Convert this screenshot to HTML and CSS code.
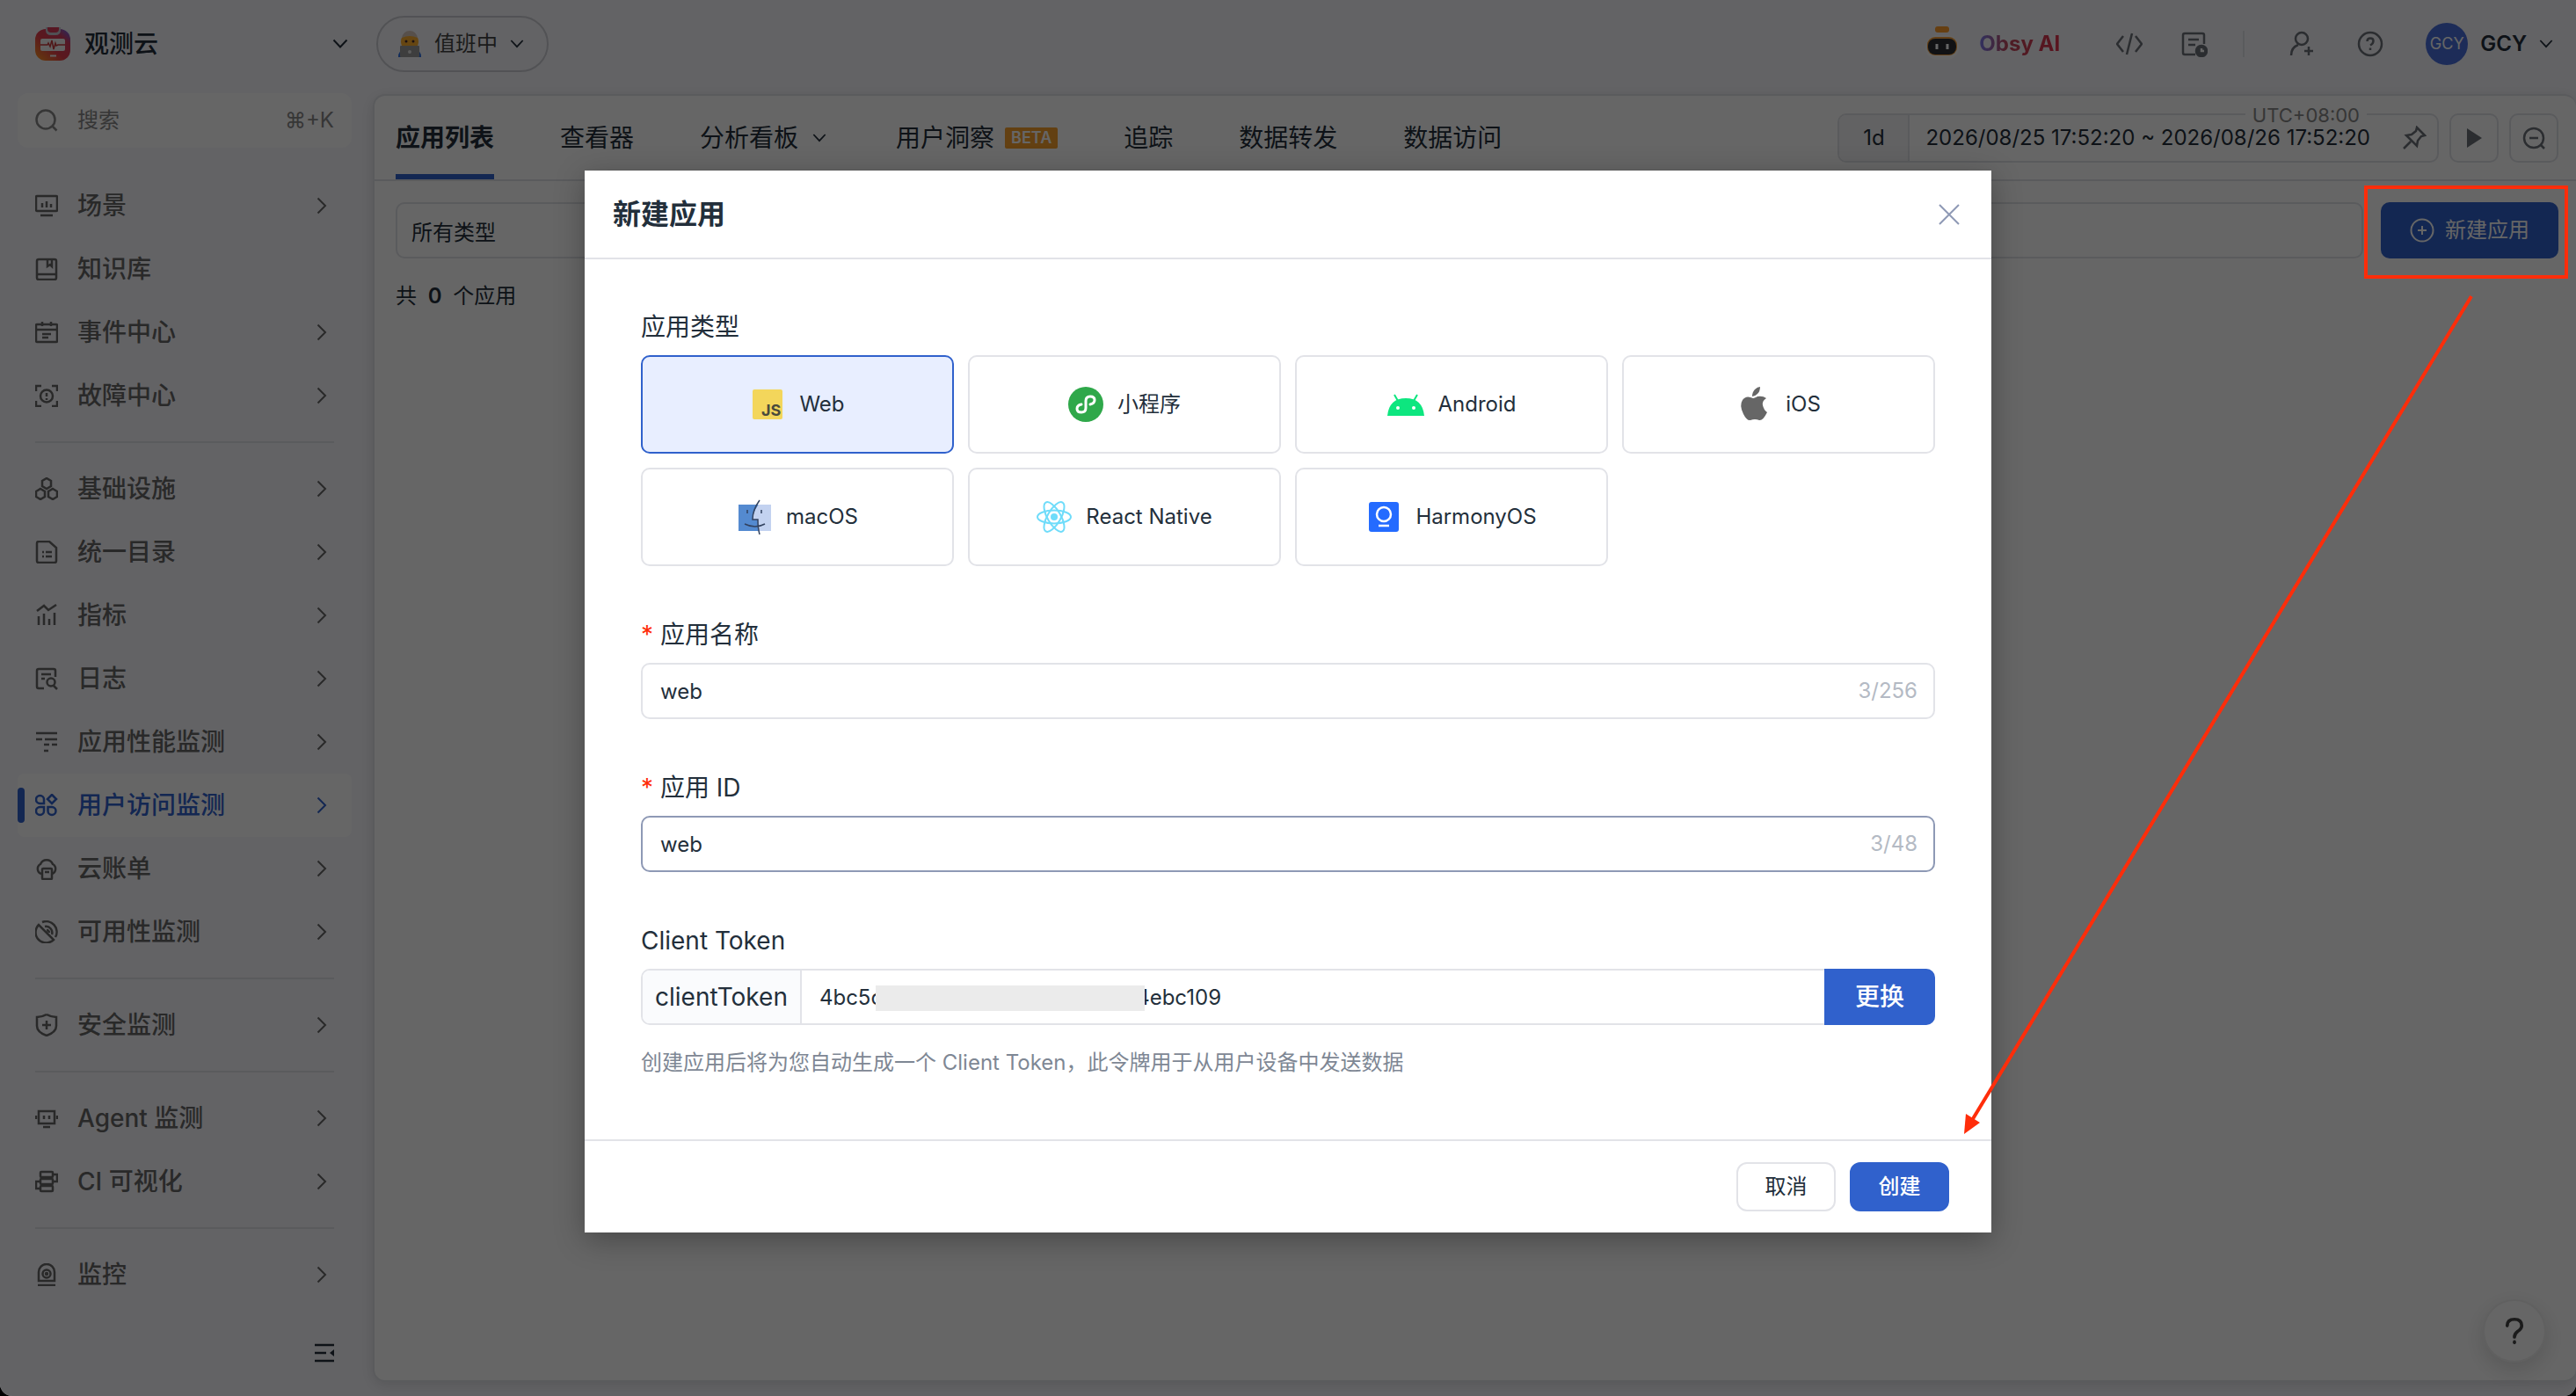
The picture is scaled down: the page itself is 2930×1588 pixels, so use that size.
FILE: index.html
```html
<!doctype html>
<html lang="zh-CN">
  <head>
    <meta charset="utf-8">
    <title>新建应用</title>
    <link rel="stylesheet" href="styles.css">
  </head>
  <body>
    <!-- shared icons -->
    <svg class="sprite" aria-hidden="true">
      <symbol id="right" viewBox="0 0 12 20"><path d="M1.5 1.5L10 10l-8.500 8.500"/></symbol>
      <symbol id="down" viewBox="0 0 18 12"><path d="M1.500 1.500L9 9.500l7.500-8"/></symbol>
    </svg>

    <div class="app">
      <aside class="sidebar">
        <div class="brand">
          <svg class="brand-logo" viewBox="0 0 40 40">
            <defs>
              <linearGradient id="logo" x1="0" y1="1" x2="1" y2="0">
                <stop offset="0" stop-color="#ff9a1f"/>
                <stop offset=".45" stop-color="#e23c4c"/>
                <stop offset=".75" stop-color="#d23c5e"/>
                <stop offset="1" stop-color="#5b6bff"/>
              </linearGradient>
            </defs>
            <rect y="3" width="40" height="36" rx="12" fill="url(#logo)"/>
            <path d="M12 1v3q0 6 6 6h5q6 0 6-6V1z" fill="#c9c9d2"/>
            <path d="M14 1h13v2q0 4-4 4h-5q-4 0-4-4z" fill="#d93a58"/>
            <rect x="6" y="14" width="28" height="14" rx="2" fill="#f4f4f4"/>
            <path d="M6 21h8l1-2 2 4 2-7 2 10 2-7 1 3 2-1h8" fill="none" stroke="#c93a3c" stroke-width="1.500"/>
            <path d="M17 33.500h7" stroke="#f4f4f4" stroke-width="2"/>
          </svg>
          <span class="brand-name">观测云</span>
          <svg class="down"><use href="#down"/></svg>
        </div>

        <button class="search">
          <svg class="icon" viewBox="0 0 26 26"><circle cx="12" cy="12" r="10.500"/><path d="M19.500 19.500l5 5"/></svg>
          <span>搜索</span>
          <kbd>⌘+K</kbd>
        </button>

        <nav class="menu">
          <a href="#"><svg class="icon" viewBox="0 0 26 26"><rect x="1" y="2" width="24" height="17" rx="1"/><path d="M8 10v5M13 8v7M18 11v4M6 24h14"/></svg>场景<svg class="right"><use href="#right"/></svg></a>
          <a href="#"><svg class="icon" viewBox="0 0 26 26"><rect x="2" y="2" width="22" height="23" rx="2"/><path d="M2 19h22M14 2v8l3-2 2 2V2"/></svg>知识库</a>
          <a href="#"><svg class="icon" viewBox="0 0 26 26"><rect x="1" y="4" width="24" height="20" rx="1"/><path d="M1 10h24M8 1v5M18 1v5M8 15h10M8 19h7"/></svg>事件中心<svg class="right"><use href="#right"/></svg></a>
          <a href="#"><svg class="icon" viewBox="0 0 26 26"><path d="M1 8V2h6M19 2h6v6M25 19v6h-6M7 25H1v-6"/><circle cx="13" cy="13.500" r="7"/><path d="M13 10v4M13 16v2"/></svg>故障中心<svg class="right"><use href="#right"/></svg></a>
          <hr>
          <a href="#"><svg class="icon" viewBox="0 0 26 26"><path d="M13 1l5 3v6l-5 3-5-3V4zM6 13l5 3v6l-5 3-5-3v-6zM20 13l5 3v6l-5 3-5-3v-6z"/></svg>基础设施<svg class="right"><use href="#right"/></svg></a>
          <a href="#"><svg class="icon" viewBox="0 0 26 26"><path d="M4 1h12l8 7v15q0 2-2 2H4q-2 0-2-2V3q0-2 2-2M8 13h2M12 13h7M8 18h2M12 18h7"/></svg>统一目录<svg class="right"><use href="#right"/></svg></a>
          <a href="#"><svg class="icon" viewBox="0 0 26 26"><path d="M2 8l8-6 5 5 9-6M4 14v10M10 11v13M16 17v7M22 10v14"/></svg>指标<svg class="right"><use href="#right"/></svg></a>
          <a href="#"><svg class="icon" viewBox="0 0 26 26"><path d="M23 11V4q0-2-2-2H4Q2 2 2 4v18q0 2 2 2h6M7 8h11M7 13h4M21 21l4 4"/><circle cx="18" cy="17" r="4.500"/></svg>日志<svg class="right"><use href="#right"/></svg></a>
          <a href="#"><svg class="icon" viewBox="0 0 26 26"><path d="M1 3h24M1 10h7M11 10h14M10 16h6M19 16h6M10 23h5"/></svg>应用性能监测<svg class="right"><use href="#right"/></svg></a>
          <a href="#" class="active"><svg class="icon" viewBox="0 0 26 26"><path d="M10 11H5.500A4.500 4.500 0 1 1 10 6.500zM19 1l5 5-5 5-5-5zM10 15v4.500A4.500 4.500 0 1 1 5.500 15zM14.500 15H19a4.500 4.500 0 1 1-4.500 4.500z"/></svg>用户访问监测<svg class="right"><use href="#right"/></svg></a>
          <a href="#"><svg class="icon" viewBox="0 0 26 26"><path d="M7 19a6 6 0 0 1-1-11 7.500 7.500 0 0 1 14 0 6 6 0 0 1-1 11"/><rect x="8" y="13" width="11" height="12" rx="1"/><path d="M11 17h5"/></svg>云账单<svg class="right"><use href="#right"/></svg></a>
          <a href="#"><svg class="icon" viewBox="0 0 26 26"><path d="M4 5a12 12 0 1 0 17 17zM8 2a12 12 0 0 1 15 17M11 7a7 7 0 0 1 8 9M13 11a3 3 0 0 1 3 3"/></svg>可用性监测<svg class="right"><use href="#right"/></svg></a>
          <hr>
          <a href="#"><svg class="icon" viewBox="0 0 26 26"><path d="M13 1q5 3 11 3v10q0 7-11 11Q2 21 2 14V4q6 0 11-3M13 8v10M8 13h10"/></svg>安全监测<svg class="right"><use href="#right"/></svg></a>
          <hr>
          <a href="#"><svg class="icon" viewBox="0 0 26 26"><rect x="4" y="5" width="18" height="14"/><path d="M10 10v4M16 10v4M1 10v4M25 10v4M9 23h8"/></svg>Agent 监测<svg class="right"><use href="#right"/></svg></a>
          <a href="#"><svg class="icon" viewBox="0 0 26 26"><rect x="6" y="2" width="14" height="6" rx="1"/><rect x="6" y="10" width="14" height="6" rx="1"/><rect x="6" y="18" width="14" height="6" rx="1"/><path d="M20 5h5v8h-5M6 13H1v8h5"/></svg>CI 可视化<svg class="right"><use href="#right"/></svg></a>
          <hr>
          <a href="#"><svg class="icon" viewBox="0 0 26 26"><path d="M4 20V10a9 9 0 0 1 18 0v10zM3 25h20"/><circle cx="13" cy="12" r="4.500"/><circle cx="13" cy="12" r="1"/></svg>监控<svg class="right"><use href="#right"/></svg></a>
        </nav>

        <button class="collapse" aria-label="收起">
          <svg viewBox="0 0 22 22"><path d="M0 2h22M0 11h13M0 20h22" stroke="#232f3b" stroke-width="2.500"/><path d="M22 7v8l-5-4z" fill="#232f3b"/></svg>
        </button>
      </aside>

      <main class="main">
        <header class="topbar">
          <button class="duty">
            <svg class="duty-icon" viewBox="0 0 28 30">
              <path d="M1 30q0-8 7-8h12q7 0 7 8z" fill="#2f6fe0"/>
              <rect x="4" y="3" width="20" height="19" rx="9" fill="#ffb02e"/>
              <path d="M5 8q2-8 9-8t9 8q-9-4-18 0" fill="#d9c7bb"/>
              <circle cx="10" cy="12" r="1.500" fill="#402a32"/><circle cx="18" cy="12" r="1.500" fill="#402a32"/>
              <rect x="3" y="17" width="22" height="13" rx="1" fill="#9b9b9b"/>
              <circle cx="14" cy="24" r="2" fill="#e6e6e6"/>
            </svg>
            值班中
            <svg class="down small"><use href="#down"/></svg>
          </button>

          <a href="#" class="obsy">
            <svg viewBox="0 0 40 40">
              <rect x="12" y="0" width="16" height="7" rx="3" fill="#ff9d2e"/>
              <rect x="1" y="10" width="38" height="28" rx="14" fill="#fff"/>
              <rect x="3" y="12" width="34" height="21" rx="9" fill="#f7a03c"/>
              <rect x="4" y="14" width="32" height="18" rx="8" fill="#2b2f33"/>
              <path d="M14 20v6M26 20v6" stroke="#fff" stroke-width="3"/>
            </svg>
            <span>Obsy AI</span>
          </a>

          <div class="tools">
            <button aria-label="API"><svg viewBox="0 0 30 30"><path d="M8 6L1 15l7 9M22 6l7 9-7 9M18 3l-6 24"/></svg></button>
            <button aria-label="记录"><svg viewBox="0 0 30 30"><path d="M26 15V5q0-2-2-2H4Q2 3 2 5v20q0 2 2 2h12M8 10h12M8 16h8"/><circle cx="23" cy="23" r="6" fill="#6b7078"/><path d="M23 20v3h3" stroke="#fff"/></svg></button>
          </div>
          <div class="tools user-tools">
            <button aria-label="邀请"><svg viewBox="0 0 30 30"><circle cx="15" cy="9" r="7"/><path d="M3 28q0-9 8-12M18 23h10M23 18v10"/></svg></button>
            <button aria-label="帮助"><svg viewBox="0 0 30 30"><circle cx="15" cy="15" r="13"/><path d="M11.500 12q0-3.500 3.500-3.500t3.500 3-3.500 5M15 19.500v2.500"/></svg></button>
          </div>
          <button class="account">
            <span class="avatar">GCY</span>
            GCY
            <svg class="down small"><use href="#down"/></svg>
          </button>
        </header>

        <section class="panel">
          <div class="panel-head">
            <nav class="tabs">
              <a href="#" class="current">应用列表</a>
              <a href="#">查看器</a>
              <a href="#">分析看板 <svg class="down small"><use href="#down"/></svg></a>
              <a href="#">用户洞察 <span class="beta">BETA</span></a>
              <a href="#">追踪</a>
              <a href="#">数据转发</a>
              <a href="#">数据访问</a>
            </nav>
            <div class="time">
              <button class="range">1d</button>
              <button class="dates">2026/08/25 17:52:20 ~ 2026/08/26 17:52:20
                <svg viewBox="0 0 28 28"><path d="M17 2l9 9-4 1-4 5-1 6L5 11l6-1 5-4zM10 18l-8 8"/></svg>
              </button>
              <span class="zone">UTC+08:00</span>
            </div>
            <button class="square" aria-label="播放"><svg viewBox="0 0 28 28"><path d="M6 3l17 11L6 25z" fill="#6b7078" stroke="none"/></svg></button>
            <button class="square" aria-label="缩小"><svg viewBox="0 0 28 28"><circle cx="14" cy="14" r="11"/><path d="M9 14h10M22 22l4 4"/></svg></button>
          </div>

          <div class="filters">
            <input type="text" value="所有类型" aria-label="类型">
            <button class="add"><svg viewBox="0 0 28 28"><circle cx="14" cy="14" r="12.500"/><path d="M14 9v10M9 14h10"/></svg>新建应用</button>
          </div>
          <p class="count">共 <b>0</b> 个应用</p>
        </section>
      </main>

      <button class="help" aria-label="帮助"><svg viewBox="0 0 24 36"><path d="M3 11q0-8 9-8t9 8q0 4-5 7-4 3-4 7" /><path d="M12 31v1"/></svg></button>

      <div class="mask">
        <form class="modal">
          <header>
            <h1>新建应用</h1>
            <button type="button" class="close" aria-label="关闭"><svg viewBox="0 0 24 24"><path d="M1 1l22 22M23 1L1 23"/></svg></button>
          </header>

          <div class="modal-body">
            <div class="label">应用类型</div>
            <div class="types">
              <button type="button" class="selected">
                <svg viewBox="0 0 40 40"><rect x="3" y="3" width="34" height="34" rx="2" fill="#f3d65b"/><text x="13" y="33" class="js">JS</text></svg>
                Web
              </button>
              <button type="button">
                <svg viewBox="0 0 40 40"><circle cx="20" cy="20" r="20" fill="#2fa84a"/><path d="M15 20q-5 1-5 5 0 4 5 4t5-5v-8q0-5 5-5t5 4q0 4-5 5" fill="none" stroke="#fff" stroke-width="3" stroke-linecap="round"/></svg>
                小程序
              </button>
              <button type="button">
                <svg class="wide" viewBox="0 0 42 40"><path d="M0 33q2-20 21-20t21 20z" fill="#0de67f"/><path d="M8 9l4 7M34 9l-4 7" stroke="#0de67f" stroke-width="2"/><circle cx="12" cy="24" r="2" fill="#fff"/><circle cx="30" cy="24" r="2" fill="#fff"/></svg>
                Android
              </button>
              <button type="button">
                <svg viewBox="0 0 40 40"><path d="M27 0q0 5-3 8t-6 3q0-5 3-8t6-3zM34 13q-5 3-4 8t5 8q-5 10-9 9-5-2-10 0-4 1-8-7-5-10-1-16 4-6 12-2 1 0 5-2 6-1 10 2z" fill="#666"/></svg>
                iOS
              </button>
              <button type="button">
                <svg viewBox="0 0 40 40"><path d="M2 6h23q-7 10-7 17h6l1 13H2z" fill="#548ad0"/><path d="M25 6h14v30H25l-1-13h-6q0-7 7-17z" fill="#c3d2f0"/><path d="M26 1q-8 11-8 22h6q0 10 2 17M9 28q12 6 23 0M12 12v4M28 12v4" fill="none" stroke="#32425f" stroke-width="1.500"/></svg>
                macOS
              </button>
              <button type="button">
                <svg viewBox="0 0 40 40"><g fill="none" stroke="#6fdcfa" stroke-width="2"><ellipse cx="20" cy="20" rx="19" ry="7.500"/><ellipse cx="20" cy="20" rx="19" ry="7.500" transform="rotate(60 20 20)"/><ellipse cx="20" cy="20" rx="19" ry="7.500" transform="rotate(120 20 20)"/></g><circle cx="20" cy="20" r="4" fill="#6fdcfa"/></svg>
                React Native
              </button>
              <button type="button">
                <svg viewBox="0 0 40 40"><rect x="3" y="3" width="34" height="34" rx="3" fill="#246bff"/><circle cx="20" cy="17" r="8" fill="none" stroke="#fff" stroke-width="2.500"/><path d="M14 30h12" stroke="#fff" stroke-width="2.500"/></svg>
                HarmonyOS
              </button>
            </div>

            <label class="label" for="name"><i>*</i> 应用名称</label>
            <div class="field">
              <input id="name" type="text" value="web">
              <span>3/256</span>
            </div>

            <label class="label" for="appid"><i>*</i> 应用 ID</label>
            <div class="field focus">
              <input id="appid" type="text" value="web">
              <span>3/48</span>
            </div>

            <label class="label" for="token">Client Token</label>
            <div class="field token">
              <span class="prefix">clientToken</span>
              <div class="token-value">
                <input id="token" type="text" value="4bc5c&emsp;&emsp;&emsp;&emsp;&emsp;&emsp;&emsp;&emsp;&emsp;&emsp;&emsp;&emsp;4ebc109">
                <div class="redacted"></div>
              </div>
              <button type="button">更换</button>
            </div>
            <p class="hint">创建应用后将为您自动生成一个 Client Token，此令牌用于从用户设备中发送数据</p>
          </div>

          <footer>
            <button type="button">取消</button>
            <button type="submit" class="primary">创建</button>
          </footer>
        </form>
      </div>

      <!-- highlight box and arrow to the create button -->
      <svg class="pointer" viewBox="0 0 740 1320">
        <rect x="501" y="213" width="228" height="102" fill="none" stroke="#ff2d0a" stroke-width="4"/>
        <path d="M621 337L52 1276" stroke="#ff2d0a" stroke-width="4"/>
        <path d="M44 1290l2-23 16 10z" fill="#ff2d0a"/>
      </svg>
    </div>
  </body>
</html>
```

FILE: styles.css
```css
* {
  box-sizing: border-box;
}
html, body {
  height: 100%;
}
body {
  margin: 0;
  background: #000;
  color: #232f3b;
  font: 24px/36px Inter, "Noto Sans CJK SC", sans-serif;
}
button, input {
  font: inherit;
  color: inherit;
  margin: 0;
  padding: 0;
  border: 0;
  background: none;
}
a {
  color: inherit;
  text-decoration: none;
}
svg {
  flex: none;
  fill: none;
  stroke-width: 2;
}
.sprite {
  position: absolute;
  width: 0;
  height: 0;
}

.app {
  position: relative;
  display: flex;
  min-height: 100%;
  border-radius: 0 0 14px 14px;
  overflow: hidden;
  background: #f8f8fd;
}
.down {
  width: 18px;
  height: 12px;
  stroke: #232f3b;
}
.down.small {
  width: 16px;
}
.right {
  width: 12px;
  height: 20px;
  margin-left: auto;
  stroke: currentColor;
}

/* sidebar */
.sidebar {
  width: 424px;
  flex: none;
  display: flex;
  flex-direction: column;
  padding: 0 24px 0 20px;
}
.brand {
  height: 106px;
  display: flex;
  align-items: center;
  gap: 16px;
  padding: 0 4px 6px 20px;
}
.brand-logo {
  width: 40px;
  height: 40px;
}
.brand-name {
  flex: 1;
  font-size: 28px;
  font-weight: 500;
}
.search {
  height: 62px;
  display: flex;
  align-items: center;
  gap: 22px;
  padding: 0 20px;
  border-radius: 12px;
  background: #fff;
  color: #888;
}
.search kbd {
  margin-left: auto;
  font: inherit;
}
.icon {
  width: 26px;
  height: 26px;
  stroke: currentColor;
  stroke-width: 2.5;
}
.menu {
  padding-top: 30px;
  color: #666;
  font-size: 28px;
  font-weight: 500;
}
.menu a {
  position: relative;
  height: 72px;
  display: flex;
  align-items: center;
  gap: 22px;
  padding: 0 28px 0 20px;
  border-radius: 8px;
}
.menu hr {
  height: 2px;
  margin: 16px 20px;
  border: 0;
  background: #e2e3e8;
}
.menu .active {
  background: #fff;
  color: #3061cc;
}
.menu .active::before {
  content: "";
  position: absolute;
  left: 0;
  width: 8px;
  height: 40px;
  border-radius: 4px;
  background: #3061cc;
}
.collapse {
  width: 22px;
  height: 22px;
  margin: 42px 20px 38px auto;
}
.collapse svg {
  display: block;
}

/* top bar */
.main {
  flex: 1;
  display: flex;
  flex-direction: column;
  padding-bottom: 16px;
}
.topbar {
  height: 107px;
  display: flex;
  align-items: center;
  padding: 0 26px 7px 4px;
}
.duty {
  height: 64px;
  display: flex;
  align-items: center;
  gap: 14px;
  padding: 0 26px 0 22px;
  border: 2px solid #ccced4;
  border-radius: 32px;
  margin-right: auto;
  color: #444;
}
.duty-icon {
  width: 28px;
  height: 30px;
}
.obsy {
  display: flex;
  align-items: center;
  gap: 22px;
  margin-right: 64px;
  font-weight: 700;
}
.obsy svg {
  width: 40px;
  height: 40px;
}
.obsy span {
  background: linear-gradient(90deg, #7a7cf0, #c0495c 35%, #e0304c);
  background-clip: text;
  color: transparent;
}
.tools {
  display: flex;
  gap: 44px;
  padding-right: 40px;
}
.tools button, .tools svg {
  display: block;
  width: 30px;
  height: 30px;
}
.tools svg {
  stroke: #6b7078;
  stroke-width: 2.5;
}
.user-tools {
  gap: 48px;
  padding: 0 48px 0 50px;
  border-left: 2px solid #e2e3e8;
}
.account {
  display: flex;
  align-items: center;
  gap: 14px;
  font-weight: 600;
}
.avatar {
  width: 48px;
  height: 48px;
  border-radius: 50%;
  background: #4a6fdc;
  color: #fff;
  font-size: 18px;
  line-height: 48px;
  font-weight: 400;
  text-align: center;
}

/* panel */
.panel {
  flex: 1;
  border: 2px solid #e2e3e8;
  border-right: 0;
  border-radius: 14px;
  background: #fff;
  box-shadow: 0 4px 16px rgba(0, 0, 0, .12);
}
.panel-head {
  height: 97px;
  display: flex;
  align-items: center;
  gap: 12px;
  padding: 0 20px 0 24px;
  border-bottom: 2px solid #e2e3e8;
}
.tabs {
  align-self: stretch;
  display: flex;
  gap: 75px;
  margin-right: auto;
  font-size: 28px;
}
.tabs a {
  display: flex;
  align-items: center;
  gap: 12px;
  white-space: nowrap;
}
.tabs .down {
  margin: 0 4px;
}
.tabs .current {
  font-weight: 700;
  border-top: 6px solid transparent;
  border-bottom: 6px solid #3061cc;
}
.beta {
  padding: 0 7px;
  border-radius: 2px;
  background: #f7a12f;
  color: #fff;
  font-size: 18px;
  line-height: 24px;
  font-weight: 600;
}
.time {
  position: relative;
  display: flex;
  height: 56px;
  border: 2px solid #e2e3e8;
  border-radius: 10px;
}
.range {
  width: 80px;
  border-right: 2px solid #e2e3e8;
  border-radius: 8px 0 0 8px;
  background: #f5f5f7;
}
.dates {
  display: flex;
  align-items: center;
  gap: 36px;
  padding: 0 12px 0 18px;
  white-space: nowrap;
}
.dates svg, .square svg {
  width: 28px;
  height: 28px;
  stroke: #6b7078;
  stroke-width: 2.500;
}
.zone {
  position: absolute;
  top: -10px;
  right: 80px;
  padding: 0 8px;
  background: #fff;
  color: #888;
  font-size: 22px;
  line-height: 20px;
}
.square {
  width: 56px;
  height: 56px;
  display: grid;
  place-items: center;
  border: 2px solid #e2e3e8;
  border-radius: 10px;
}
.filters {
  display: flex;
  gap: 20px;
  padding: 24px 20px 0 24px;
}
.filters input {
  flex: 1;
  height: 64px;
  padding: 0 16px;
  border: 2px solid #e2e3e8;
  border-radius: 10px;
}
.add {
  width: 202px;
  display: flex;
  align-items: center;
  justify-content: center;
  gap: 12px;
  border-radius: 10px;
  background: #3061cc;
  color: #fff;
}
.add svg {
  width: 28px;
  height: 28px;
  stroke: #fff;
}
.count {
  margin: 25px 24px;
}
.count b {
  margin: 0 6px;
  font-weight: 600;
}
.help {
  position: absolute;
  right: 34px;
  bottom: 38px;
  width: 72px;
  height: 72px;
  display: grid;
  place-items: center;
  border: 2px solid #f0f0f0;
  border-radius: 50%;
  background: #fff;
  box-shadow: 0 8px 24px rgba(0, 0, 0, .14);
}
.help svg {
  width: 22px;
  height: 33px;
  stroke: #444;
  stroke-width: 4;
  stroke-linecap: round;
}

/* modal */
.mask {
  position: absolute;
  inset: 0;
  padding-top: 194px;
  background: rgba(0, 0, 0, .6);
}
.modal {
  width: 1600px;
  max-width: 90%;
  margin: 0 auto;
  background: #fff;
  box-shadow: 0 8px 32px rgba(0, 0, 0, .3);
}
.modal header {
  height: 101px;
  display: flex;
  align-items: center;
  justify-content: space-between;
  padding: 0 36px 0 32px;
  border-bottom: 2px solid #e2e3e8;
}
.modal h1 {
  margin: 0;
  font-size: 32px;
  font-weight: 700;
}
.close svg {
  display: block;
  width: 24px;
  height: 24px;
  stroke: #8e99b5;
}
.modal-body {
  padding: 55px 64px 69px;
}
.label {
  display: block;
  margin-bottom: 10px;
  font-size: 28px;
  line-height: 44px;
}
.label i {
  color: #ff2d0a;
  font-style: normal;
}
.types {
  display: grid;
  grid-template-columns: repeat(4, 1fr);
  gap: 16px;
  margin-bottom: 56px;
}
.types button {
  height: 112px;
  display: flex;
  align-items: center;
  justify-content: center;
  gap: 16px;
  border: 2px solid #e2e3e8;
  border-radius: 10px;
}
.types svg {
  width: 40px;
  height: 40px;
}
.types .wide {
  width: 42px;
}
.types .selected {
  border-color: #3061cc;
  background: #e8eeff;
}
.js {
  fill: #4a4a3c;
  font-size: 18px;
  font-weight: 700;
}
.field {
  height: 64px;
  display: flex;
  align-items: center;
  margin-bottom: 56px;
  border: 2px solid #e2e3e8;
  border-radius: 10px;
}
.field input {
  flex: 1;
  height: 100%;
  padding: 0 20px;
  outline: 0;
}
.field span {
  padding-right: 18px;
  color: #b4bac4;
}
.focus {
  border-color: #8e99b5;
}
.token {
  margin-bottom: 25px;
}
.token .prefix {
  padding: 0 14px;
  border-right: 2px solid #e2e3e8;
  border-radius: 8px 0 0 8px;
  background: #fafbfd;
  color: inherit;
  font-size: 28px;
  line-height: 60px;
}
.token-value {
  position: relative;
  flex: 1;
  height: 100%;
}
.token-value input {
  width: 100%;
}
.redacted {
  position: absolute;
  left: 84px;
  top: 17px;
  width: 306px;
  height: 29px;
  background: #ebebeb;
}
.token button {
  width: 126px;
  height: 64px;
  margin: -2px;
  border-radius: 0 10px 10px 0;
  background: #3061cc;
  color: #fff;
  font-size: 28px;
  font-weight: 500;
}
.hint {
  margin: 0;
  color: #7e8794;
}
.modal footer {
  display: flex;
  justify-content: flex-end;
  gap: 16px;
  padding: 24px 48px;
  border-top: 2px solid #e2e3e8;
}
.modal footer button {
  width: 113px;
  height: 56px;
  border: 2px solid #e2e3e8;
  border-radius: 12px;
}
.modal footer .primary {
  border-color: #3061cc;
  background: #3061cc;
  color: #fff;
  font-weight: 500;
}

.pointer {
  position: absolute;
  top: 0;
  right: 0;
  width: 740px;
  height: 1320px;
  pointer-events: none;
}
```
